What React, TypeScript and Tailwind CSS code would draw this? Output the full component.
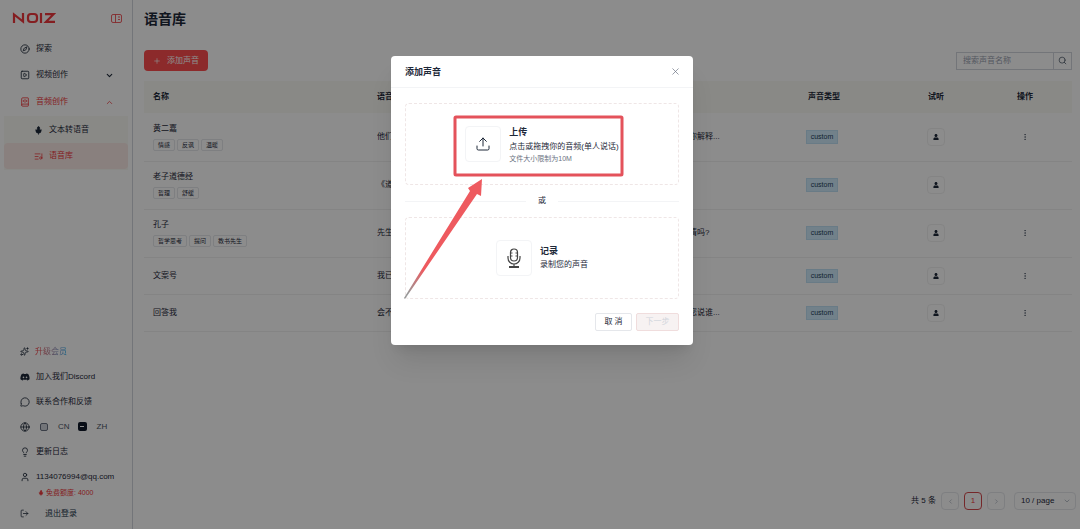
import {
  Compass, SquarePlay, ChevronDown, ChevronUp, BookAudio, Mic, ListMusic, Sparkles, MessageCircle,
  Globe, Lightbulb, User, LogOut, Search, MoreVertical, X, Plus, ChevronLeft, ChevronRight, Upload,
} from 'lucide-react';
import { FaDiscord, FaUser } from 'react-icons/fa';

interface Voice {
  name: string;
  tags: string[];
  text: string;
  hasMenu: boolean;
}

const voices: Voice[] = [
  {
    name: '黄二嘉',
    tags: ['情感', '反讽', '温暖'],
    text: '他们总是在说同样的话，可是没有人愿意停下来认真地听一听，所以今天我想要再慢慢给你解释...',
    hasMenu: true,
  },
  { name: '老子道德经', tags: ['哲理', '舒缓'], text: '《道德经》第一章，道可道，非常道', hasMenu: false },
  {
    name: '孔子',
    tags: ['哲学思考', '提问', '教书先生'],
    text: '先生，学而时习之，不亦说乎？有朋自远方来，不亦乐乎？您能给我们讲一讲这里面的事情吗?',
    hasMenu: true,
  },
  { name: '文案号', tags: [], text: '我已经准备好今天的内容了', hasMenu: true },
  {
    name: '回答我',
    tags: [],
    text: '会不会有一天，我们都能够好好地坐下来，把这些事情全都讲清楚，再告诉我刚才那句话您说谁...',
    hasMenu: true,
  },
];

function Logo() {
  return (
    <svg viewBox="0 0 44 12" className="h-3 w-11" fill="none" stroke="#f0383c" strokeWidth="2.2">
      <path d="M2 11V2.5l9 7V1" />
      <rect x="16" y="2" width="9" height="8" rx="3" />
      <path d="M29 1v10M33 2.2h8.5l-7.5 7.6h9" />
    </svg>
  );
}

function Sidebar() {
  const item = 'flex w-full items-center gap-1.5 pl-5 text-left';

  return (
    <aside className="flex w-[133px] shrink-0 flex-col justify-between border-r border-gray-300">
      <div>
        <div className="flex h-9 items-center justify-between pl-3 pr-2.5">
          <Logo />
          <button aria-label="收起侧栏" className="text-[#f0383c]">
            <svg viewBox="0 0 11 9" className="h-[9px] w-[11px]" fill="none" stroke="currentColor" strokeWidth="0.8">
              <rect x="0.5" y="0.5" width="10" height="8" rx="1.5" />
              <path d="M4.5 0.5v8M7 3h2M7 5.5h2" />
            </svg>
          </button>
        </div>
        <nav>
          <a href="#explore" className={`${item} h-[26px]`}>
            <Compass size={10} />
            探索
          </a>
          <button className={`${item} h-[26px]`}>
            <SquarePlay size={10} />
            <span className="flex-1">视频创作</span>
            <ChevronDown size={9} strokeWidth={3} className="mr-[18px]" />
          </button>
          <button className={`${item} h-7 text-[#f0383c]`}>
            <BookAudio size={10} />
            <span className="flex-1">音频创作</span>
            <ChevronUp size={9} className="mr-[18px]" />
          </button>
          <div className="mx-1 bg-[#f9f9f5] py-px">
            <a href="#tts" className="flex h-[26px] items-center gap-1.5 pl-[30px]">
              <Mic size={9} fill="currentColor" />
              文本转语音
            </a>
            <a href="#library" className="flex h-[26px] items-center gap-1.5 rounded bg-[#fae9e5] pl-[30px] text-[#f0383c]">
              <ListMusic size={9} />
              语音库
            </a>
          </div>
        </nav>
      </div>

      <div className="pb-[3px]">
        <a href="#upgrade" className={`${item} h-[25px]`}>
          <Sparkles size={9} />
          <span className="bg-gradient-to-r from-red-500 to-sky-500 bg-clip-text text-transparent">升级会员</span>
        </a>
        <a href="#discord" className={`${item} h-[25px]`}>
          <FaDiscord size={10} />
          加入我们Discord
        </a>
        <a href="#contact" className={`${item} h-[25px]`}>
          <MessageCircle size={10} />
          联系合作和反馈
        </a>
        <div className={`${item} h-[25px]`}>
          <Globe size={10} />
          <button className="flex items-center gap-2.5 pl-1 text-gray-600">
            <span className="size-2 rounded-xs border border-gray-500 bg-gray-300" />
            CN
          </button>
          <button className="flex items-center gap-2.5 pl-0.5 text-gray-600">
            <span className="flex size-[9px] items-center justify-center rounded-xs bg-gray-900">
              <span className="h-px w-1 bg-white" />
            </span>
            ZH
          </button>
        </div>
        <a href="#changelog" className={`${item} h-[25px]`}>
          <Lightbulb size={10} />
          更新日志
        </a>
        <a href="#account" className={`${item} h-[25px]`}>
          <User size={10} />
          1134076994@qq.com
        </a>
        <p className="flex h-2 items-center gap-0.5 pl-[38px] text-[7px] text-[#f0383c]">
          <Mic size={6} fill="currentColor" />
          免费额度: 4000
        </p>
        <button className="flex h-[29px] w-full items-center gap-4 pl-5 pt-1">
          <LogOut size={9} />
          <span className="text-[#26384a]">退出登录</span>
        </button>
      </div>
    </aside>
  );
}

function VoiceTable() {
  return (
    <table className="w-full table-fixed border-collapse text-left">
      <thead>
        <tr className="h-8 bg-[#f9f9f5]">
          <th className="w-56 px-[9px]">名称</th>
          <th className="px-[9px]">语音文本</th>
          <th className="w-[140px] text-center">声音类型</th>
          <th className="w-[84px] text-center">试听</th>
          <th className="w-[94px] text-center">操作</th>
        </tr>
      </thead>
      <tbody>
        {voices.map((voice) => (
          <tr key={voice.name} className={`border-b border-[#f0f0f0] ${voice.tags.length ? 'h-12' : 'h-[37px]'}`}>
            <td className="px-[9px]">
              <div className="leading-3">{voice.name}</div>
              {voice.tags.length > 0 && (
                <div className="mt-1 flex gap-0.5">
                  {voice.tags.map((tag) => (
                    <span key={tag} className="rounded-xs border border-gray-200 px-1 text-[6px] leading-[10px]">
                      {tag}
                    </span>
                  ))}
                </div>
              )}
            </td>
            <td className="px-[9px]">
              <div className="overflow-hidden whitespace-nowrap">{voice.text}</div>
            </td>
            <td className="text-center">
              <span className="mr-1 inline-block w-8 border border-[#c0e0f5] bg-[#d0ebfc] text-center text-[7px] leading-3 text-[#1d3f5a]">
                custom
              </span>
            </td>
            <td>
              <button
                aria-label={`试听${voice.name}`}
                className="mx-auto flex size-[18px] items-center justify-center rounded border border-[#f0f0f0]"
              >
                <FaUser size={6} />
              </button>
            </td>
            <td>
              {voice.hasMenu && (
                <button aria-label="更多" className="mx-auto block text-gray-600">
                  <MoreVertical size={8} />
                </button>
              )}
            </td>
          </tr>
        ))}
      </tbody>
    </table>
  );
}

function Pagination() {
  const box = 'flex size-[18px] items-center justify-center rounded border';

  return (
    <div className="-mr-1 flex items-center justify-end gap-[5px]">
      <span>共 5 条</span>
      <button aria-label="上一页" className={`${box} border-gray-200 text-gray-400`}>
        <ChevronLeft size={7} />
      </button>
      <button className={`${box} border-[#d6494d] text-[#f0383c]`}>1</button>
      <button aria-label="下一页" className={`${box} border-gray-200 text-gray-400`}>
        <ChevronRight size={7} />
      </button>
      <div className="ml-1 flex h-[18px] items-center rounded border border-gray-200 pl-1.5 pr-1">
        <select aria-label="每页条数" className="w-[42px] appearance-none bg-transparent">
          <option>10 / page</option>
        </select>
        <ChevronDown size={8} className="text-gray-400" />
      </div>
    </div>
  );
}

function AddVoiceDialog() {
  const card = 'flex w-full items-center justify-center gap-2 rounded border border-dashed border-[#efe6e6] text-left';

  return (
    <div
      role="dialog"
      aria-label="添加声音"
      className="relative w-[302px] rounded bg-white pb-3.5 shadow-xl"
    >
      <div className="flex h-8 items-center justify-between border-b border-gray-100 px-3.5">
        <h2 className="text-[9px] font-bold">添加声音</h2>
        <button aria-label="关闭" className="-mr-0.5 text-gray-500">
          <X size={11} strokeWidth={1.5} />
        </button>
      </div>
      <div className="px-3.5 pt-[15px]">
        <button className={`${card} h-[82px]`}>
          <span className="flex size-9 items-center justify-center rounded border border-gray-100">
            <Upload size={16} strokeWidth={1.5} />
          </span>
          <span className="flex flex-col">
            <span className="text-[9px] font-bold leading-[14px]">上传</span>
            <span className="mt-px leading-[14px]">点击或拖拽你的音频(单人说话)</span>
            <span className="text-[7px] leading-[10px] text-gray-500">文件大小限制为10M</span>
          </span>
        </button>
        <div className="flex h-8 items-center gap-3">
          <hr className="flex-1 border-gray-100" />
          或
          <hr className="flex-1 border-gray-100" />
        </div>
        <button className={`${card} h-[82px]`}>
          <span className="flex size-9 items-center justify-center rounded border border-gray-100">
            <MicIcon />
          </span>
          <span className="flex flex-col">
            <span className="text-[9px] font-bold leading-[14px]">记录</span>
            <span className="leading-[14px]">录制您的声音</span>
          </span>
        </button>
      </div>
      <div className="flex justify-end gap-1 px-3.5 pt-3.5">
        <button className="h-[18px] w-[37px] rounded-xs border border-gray-200">取 消</button>
        <button disabled className="h-[18px] w-[43px] rounded-xs border border-[#f0dddd] bg-[#f7f2f2] text-gray-300">
          下一步
        </button>
      </div>
      <Callout />
    </div>
  );
}

function MicIcon() {
  return (
    <svg viewBox="0 0 16 20" className="h-5 w-4" fill="none" stroke="#444" strokeWidth="1.2">
      <rect x="4.5" y="1" width="7" height="12" rx="3.5" />
      <path d="M2 8v2a6 6 0 0 0 12 0V8M8 16v3M4.5 5h2M9.5 5h2M4.5 8h2M9.5 8h2" />
      <path d="M3 19h10" strokeWidth="2" />
    </svg>
  );
}

// Red frame and arrow pointing at the upload entry
function Callout() {
  return (
    <svg viewBox="0 0 302 290" className="pointer-events-none absolute left-0 top-0 h-[290px] w-[302px]">
      <defs>
        <linearGradient id="tail" x1="0" y1="1" x2="1" y2="0">
          <stop offset="0.05" stopColor="#999" />
          <stop offset="0.25" stopColor="#ee5a5f" />
        </linearGradient>
      </defs>
      <rect x="64" y="61" width="167" height="58" rx="1" fill="none" stroke="#e4525b" strokeWidth="3" />
      <path d="M13 242L79 135L77 132L91 123L90 140L86 138L14 243Z" fill="url(#tail)" />
    </svg>
  );
}

export default function App() {
  return (
    <div className="relative flex min-h-screen bg-white font-['Liberation_Sans','Noto_Sans_CJK_SC',sans-serif] text-[8px] leading-3 text-gray-800">
      <Sidebar />
      <main className="flex min-w-0 flex-1 flex-col justify-between pb-[19px] pl-[11px] pr-2">
        <div>
          <h1 className="flex h-[38px] items-center text-sm font-bold">语音库</h1>
          <div className="flex items-center justify-between pb-2.5 pt-3">
            <button className="flex h-[21px] w-16 items-center justify-center gap-1.5 rounded bg-[#ff4d4f] text-white">
              <Plus size={8} />
              添加声音
            </button>
            <div className="flex h-[18px] items-center border border-gray-300">
              <input
                aria-label="搜索声音名称"
                placeholder="搜索声音名称"
                className="h-full w-24 px-1.5 placeholder:text-gray-400"
              />
              <button aria-label="搜索" className="flex h-full w-[18px] items-center justify-center border-l border-gray-300 text-gray-600">
                <Search size={9} />
              </button>
            </div>
          </div>
          <VoiceTable />
        </div>
        <Pagination />
      </main>
      <div className="absolute inset-0 flex items-start justify-center bg-black/45 pl-1 pt-14">
        <AddVoiceDialog />
      </div>
    </div>
  );
}
